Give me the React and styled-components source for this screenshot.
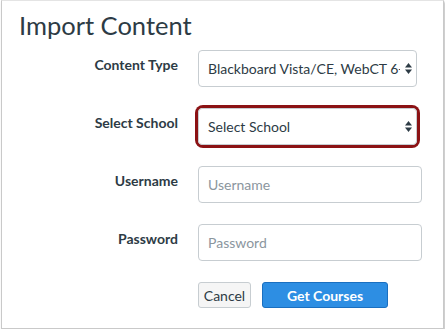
import React from 'react';
import styled, { createGlobalStyle } from 'styled-components';

const GlobalStyle = createGlobalStyle`
  html, body {
    margin: 0;
    padding: 0;
    background: #ffffff;
    font-family: Lato, "Noto Sans", sans-serif;
  }
`;

const Panel = styled.div`
  box-sizing: border-box;
  width: 443px;
  height: 329px;
  margin-left: 1px;
  border: 1px solid #c9c9c9;
  border-top-color: #e4e4e4;
  background: #fff;
  box-shadow: 1px 2px 2px rgba(0, 0, 0, 0.28);
  padding: 7px 0 0 17px;
`;

const Title = styled.h1`
  margin: 0 0 8px;
  font-size: 25.5px;
  line-height: 34px;
  font-weight: 400;
  color: #2d3b45;
`;

const Form = styled.form`
  display: grid;
  grid-template-columns: 159px auto;
  column-gap: 20px;
  row-gap: 21px;
  align-items: start;
`;

const Label = styled.label`
  justify-self: end;
  padding-top: 5px;
  font-size: 14px;
  line-height: 20px;
  font-weight: 700;
  color: #2d3b45;
`;

const SelectWrap = styled.div`
  position: relative;
  width: ${({ $w }) => $w}px;
  height: 37px;
  border-radius: 5px;
  box-shadow: ${({ $focus }) => ($focus ? '0 0 0 3px #8b1214' : 'none')};
`;

const Select = styled.select`
  box-sizing: border-box;
  appearance: none;
  width: 100%;
  height: 37px;
  margin: 0;
  padding: 0 16px 0 9px;
  border: 1px solid #c7cdd1;
  border-radius: 4px;
  background: #fff;
  font-family: Lato, "Noto Sans", sans-serif;
  font-size: 14px;
  color: #2d3b45;
  outline: none;
`;

const Arrows = styled.svg`
  position: absolute;
  right: 5px;
  top: 13px;
  pointer-events: none;
`;

const Input = styled.input`
  box-sizing: border-box;
  width: 224px;
  height: 37px;
  margin: 0;
  padding: 0 9px;
  border: 1px solid #c7cdd1;
  border-radius: 4px;
  font-family: Lato, "Noto Sans", sans-serif;
  font-size: 14px;
  color: #2d3b45;
  outline: none;
  &::placeholder {
    color: #8b969e;
  }
`;

const Actions = styled.div`
  grid-column: 2;
  display: flex;
  gap: 11px;
`;

const Button = styled.button`
  box-sizing: border-box;
  height: 26px;
  width: ${({ $w }) => $w}px;
  padding: 0;
  border-radius: 3px;
  border: 1px solid ${({ $primary }) => ($primary ? '#1a6fc0' : '#c7cdd1')};
  background: ${({ $primary }) => ($primary ? '#2d8ee3' : '#f5f5f5')};
  color: ${({ $primary }) => ($primary ? '#fff' : '#2d3b45')};
  font-family: Lato, "Noto Sans", sans-serif;
  font-size: 14px;
  font-weight: ${({ $primary }) => ($primary ? 700 : 400)};
  cursor: pointer;
`;

function SortArrows() {
  return (
    <Arrows width="7" height="11" viewBox="0 0 7 11">
      <path d="M3.5 0 L7 4.5 H0 Z" fill="#2d3b45" />
      <path d="M3.5 11 L7 6.5 H0 Z" fill="#2d3b45" />
    </Arrows>
  );
}

export default function App() {
  return (
    <>
      <GlobalStyle />
      <Panel>
        <Title>Import Content</Title>
        <Form onSubmit={(e) => e.preventDefault()}>
          <Label htmlFor="type">Content Type</Label>
          <SelectWrap $w={219}>
            <Select id="type" defaultValue="bb">
              <option value="bb">Blackboard Vista/CE, WebCT 6+ Course</option>
            </Select>
            <SortArrows />
          </SelectWrap>

          <Label htmlFor="school">Select School</Label>
          <SelectWrap $w={219} $focus>
            <Select id="school" defaultValue="">
              <option value="">Select School</option>
            </Select>
            <SortArrows />
          </SelectWrap>

          <Label htmlFor="user">Username</Label>
          <Input id="user" placeholder="Username" />

          <Label htmlFor="pass">Password</Label>
          <Input id="pass" type="password" placeholder="Password" />

          <Actions>
            <Button type="button" $w={53}>Cancel</Button>
            <Button type="submit" $w={126} $primary>Get Courses</Button>
          </Actions>
        </Form>
      </Panel>
    </>
  );
}
